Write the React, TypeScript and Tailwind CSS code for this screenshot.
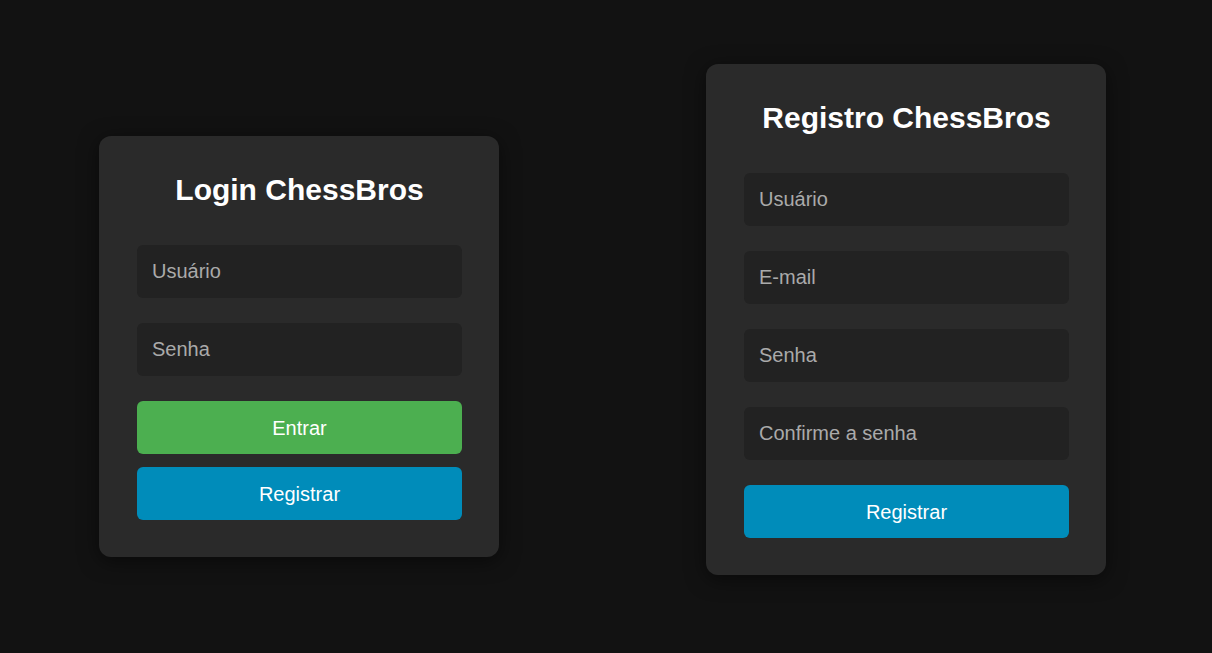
export default function App() {
  return (
    <div className="flex min-h-[653px] items-start gap-[207px] bg-[#121212] pl-[99px] font-['Liberation_Sans',Arial,sans-serif]">
      <form
        className="mt-[136px] flex w-[400px] flex-col rounded-xl bg-[#2a2a2a] pb-[37px] pl-[38px] pr-[37px] pt-[31px] shadow-[0_4px_20px_rgba(0,0,0,0.5)]"
        onSubmit={(e) => e.preventDefault()}
      >
        <h2 className="mb-[33px] text-center text-[30px] font-bold text-white">Login ChessBros</h2>
        <input placeholder="Usuário" className="mb-[25px] h-[53px] w-full rounded-md bg-[#222] px-[15px] text-[20px] text-white placeholder:text-[#aaa] outline-none" />
        <input type="password" placeholder="Senha" className="mb-[25px] h-[53px] w-full rounded-md bg-[#222] px-[15px] text-[20px] text-white placeholder:text-[#aaa] outline-none" />
        <button className="mb-[13px] h-[53px] w-full rounded-md bg-[#4caf50] text-[20px] text-white">Entrar</button>
        <button type="button" className="h-[53px] w-full rounded-md bg-[#008cba] text-[20px] text-white">Registrar</button>
      </form>

      <form
        className="mt-[64px] flex w-[400px] flex-col rounded-xl bg-[#2a2a2a] pb-[37px] pl-[38px] pr-[37px] pt-[31px] shadow-[0_4px_20px_rgba(0,0,0,0.5)]"
        onSubmit={(e) => e.preventDefault()}
      >
        <h2 className="mb-[33px] text-center text-[30px] font-bold text-white">Registro ChessBros</h2>
        <input placeholder="Usuário" className="mb-[25px] h-[53px] w-full rounded-md bg-[#222] px-[15px] text-[20px] text-white placeholder:text-[#aaa] outline-none" />
        <input type="email" placeholder="E-mail" className="mb-[25px] h-[53px] w-full rounded-md bg-[#222] px-[15px] text-[20px] text-white placeholder:text-[#aaa] outline-none" />
        <input type="password" placeholder="Senha" className="mb-[25px] h-[53px] w-full rounded-md bg-[#222] px-[15px] text-[20px] text-white placeholder:text-[#aaa] outline-none" />
        <input type="password" placeholder="Confirme a senha" className="mb-[25px] h-[53px] w-full rounded-md bg-[#222] px-[15px] text-[20px] text-white placeholder:text-[#aaa] outline-none" />
        <button className="h-[53px] w-full rounded-md bg-[#008cba] text-[20px] text-white">Registrar</button>
      </form>
    </div>
  );
}
